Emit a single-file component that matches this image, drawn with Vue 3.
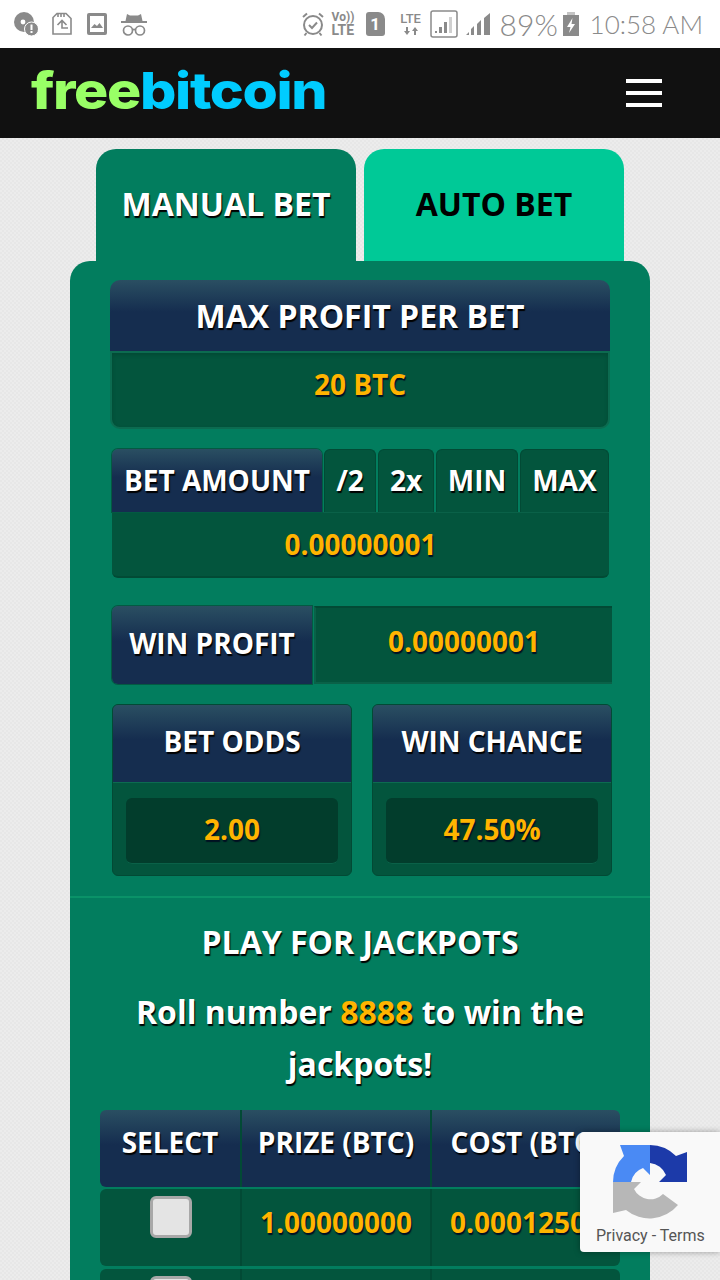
<template>
  <div class="phone">
    <div class="status-bar">
      <div class="status-left">
        <svg class="ico" width="24" height="24" viewBox="0 0 24 24">
          <circle cx="10" cy="10" r="10" fill="#8a8a8a" />
          <circle cx="9" cy="10" r="2.4" fill="#fff" />
          <circle cx="17.5" cy="17" r="7" fill="#8a8a8a" stroke="#fff" stroke-width="1" />
          <rect x="16.5" y="12.5" width="2" height="5.5" fill="#fff" />
          <rect x="16.5" y="19" width="2" height="2" fill="#fff" />
        </svg>
        <svg class="ico" width="22" height="24" viewBox="0 0 22 24" fill="none" stroke="#8a8a8a" stroke-width="1.6">
          <path d="M6 1.5h9l5 5v15.5H2V5.5z" />
          <path d="M7 1v4M10 1v4M13 1v4" />
          <path d="M6.500 13l4.500-4.500 4.500 4.500M11 9v7h6" />
        </svg>
        <svg class="ico" width="22" height="24" viewBox="0 0 22 24">
          <rect x="1" y="1" width="20" height="22" rx="2" fill="#8a8a8a" />
          <rect x="4" y="4" width="14" height="16" fill="#fff" />
          <path d="M5 16l3.500-4 2.500 2 2.500-3 3.500 5z" fill="#8a8a8a" />
        </svg>
        <svg class="ico" width="26" height="24" viewBox="0 0 26 24">
          <path d="M6 2l3 1.500h8l3-1.500 1.500 7H4.500z" fill="#8a8a8a" />
          <rect x="0" y="9" width="26" height="2" fill="#8a8a8a" />
          <g fill="none" stroke="#8a8a8a" stroke-width="1.700">
            <circle cx="7" cy="18.500" r="4.500" />
            <circle cx="19" cy="18.500" r="4.500" />
            <path d="M11.500 17.500h3" />
          </g>
        </svg>
      </div>
      <div class="status-right">
        <svg class="alarm" width="22" height="26" viewBox="0 0 22 26" fill="none" stroke="#8a8a8a" stroke-width="2">
          <circle cx="11" cy="14" r="9" />
          <path d="M7 14l3 3 5-5.500" />
          <path d="M1 6l4-3.500M21 6l-4-3.500M4.500 22l-2 2.500M17.500 22l2 2.500" />
        </svg>
        <div class="volte"><span>Vo))</span><span class="volte-lte">LTE</span></div>
        <div class="sim">1</div>
        <div class="lte">
          <span>LTE</span>
          <svg width="14" height="8" viewBox="0 0 14 8" fill="#8a8a8a">
            <path d="M2 0h2v4h2L3 8 0 4h2zM10 8h2V4h2l-3-4-3 4h2z" />
          </svg>
        </div>
        <svg class="signal-box" width="28" height="28" viewBox="0 0 28 28">
          <rect x="1" y="1" width="26" height="26" rx="2" fill="none" stroke="#8a8a8a" stroke-width="1.500" />
          <rect x="5" y="21" width="2" height="2" fill="#8a8a8a" />
          <rect x="9" y="17" width="3" height="6" fill="#8a8a8a" />
          <rect x="14" y="12" width="3" height="11" fill="#8a8a8a" />
          <rect x="19" y="7" width="3" height="16" fill="#d0d0d0" />
        </svg>
        <svg class="signal" width="25" height="24" viewBox="0 0 25 24">
          <path d="M0 23l3-3v3zM5 23v-6l3-3v9zM11 23V12l4-4v15zM18 23V6l6-5v22z" fill="#8a8a8a" />
        </svg>
        <span class="pct">89%</span>
        <svg class="battery" width="16" height="24" viewBox="0 0 16 24">
          <rect x="4" y="0" width="8" height="3" fill="#c4c4c4" />
          <rect x="0" y="3" width="16" height="21" fill="#8a8a8a" />
          <path d="M9.500 6L4 15h3.500L6 21l6-9H8.500z" fill="#fff" />
        </svg>
        <span class="clock">10:58 AM</span>
      </div>
    </div>

    <header class="site-header">
      <div class="logo"><span class="free">free</span><span class="bitcoin">bitcoin</span></div>
      <div class="burger"><i></i><i></i><i></i></div>
    </header>

    <main class="content">
      <div class="tabs">
        <div class="tab tab-active">MANUAL BET</div>
        <div class="tab tab-other">AUTO BET</div>
      </div>

      <section class="panel">
        <div class="max-profit">
          <div class="head max-head">MAX PROFIT PER BET</div>
          <div class="max-value gold">20 BTC</div>
        </div>

        <div class="bet-amount">
          <div class="bet-row">
            <div class="head bet-label">BET AMOUNT</div>
            <div
              v-for="btn in betButtons"
              :key="btn.label"
              class="bet-btn"
              :style="{ width: btn.width + 'px' }"
            >
              {{ btn.label }}
            </div>
          </div>
          <div class="bet-value gold">0.00000001</div>
        </div>

        <div class="win-profit">
          <div class="head win-label">WIN PROFIT</div>
          <div class="win-value gold">0.00000001</div>
        </div>

        <div class="odds-row">
          <div v-for="item in oddsBoxes" :key="item.label" class="odds-box">
            <div class="head odds-head">{{ item.label }}</div>
            <div class="odds-body">
              <div class="odds-inner gold">{{ item.value }}</div>
            </div>
          </div>
        </div>

        <div class="divider"></div>

        <h3 class="jackpot-title">PLAY FOR JACKPOTS</h3>
        <p class="jackpot-text">Roll number <span class="gold-plain">8888</span> to win the jackpots!</p>

        <div class="jackpot-table">
          <div class="table-row table-head">
            <div class="head cell-select first-head">SELECT</div>
            <div class="head cell-prize">PRIZE (BTC)</div>
            <div class="head cell-cost last-head">COST (BTC)</div>
          </div>
          <div v-for="row in jackpots" :key="row.prize" class="table-row">
            <div class="body-cell cell-select"><span class="check"></span></div>
            <div class="body-cell cell-prize gold">{{ row.prize }}</div>
            <div class="body-cell cell-cost gold">{{ row.cost }}</div>
          </div>
        </div>
      </section>
    </main>

    <div class="recaptcha">
      <svg width="74" height="74" viewBox="0 0 74 74">
        <path d="M0 37A37 37 0 0 1 11 11L7 0H37V30L30 23A19 19 0 0 0 18 37Z" fill="#4a8af4" />
        <path d="M37 0A37 37 0 0 1 63 11L74 7V37H46L53 30A19 19 0 0 0 37 18Z" fill="#1c3aa9" />
        <path d="M0 37H28L21 44A18 18 0 0 0 50 49L65 60A37 37 0 0 1 13 65L0 68Z" fill="#b7b7b7" />
      </svg>
      <div class="recaptcha-links">Privacy - Terms</div>
    </div>
  </div>
</template>

<script setup>
const betButtons = [
  { label: '/2', width: 52 },
  { label: '2x', width: 56 },
  { label: 'MIN', width: 82 },
  { label: 'MAX', width: 89 }
]

const oddsBoxes = [
  { label: 'BET ODDS', value: '2.00' },
  { label: 'WIN CHANCE', value: '47.50%' }
]

const jackpots = [
  { prize: '1.00000000', cost: '0.00012500' },
  { prize: '0.10000000', cost: '0.00002500' }
]
</script>

<style>
html,
body {
  margin: 0;
  background: #eaeaea;
}
</style>

<style scoped>
.phone {
  position: relative;
  width: 720px;
  height: 1280px;
  overflow: hidden;
  background: repeating-conic-gradient(#ececec 0 25%, #e7e7e7 0 50%) 0 0 / 4px 4px;
  font-family: "Open Sans", "Liberation Sans", sans-serif;
}

.status-bar {
  height: 48px;
  background: #fff;
  display: flex;
  justify-content: space-between;
  align-items: center;
  box-sizing: border-box;
  padding: 0 17px 0 14px;
  color: #8a8a8a;
}

.status-left {
  display: flex;
  align-items: center;
  gap: 13px;
}

.status-right {
  display: flex;
  align-items: center;
}

.alarm {
  margin-right: 8px;
}

.volte {
  width: 25px;
  display: flex;
  flex-direction: column;
  font-family: "Roboto", sans-serif;
  font-weight: 700;
  font-size: 12px;
  line-height: 13px;
  margin-right: 9px;
}

.volte-lte {
  font-size: 14px;
}

.sim {
  width: 19px;
  height: 24px;
  background: #8a8a8a;
  color: #fff;
  border-radius: 3px 7px 3px 3px;
  font-family: "Roboto", sans-serif;
  font-weight: 700;
  font-size: 17px;
  line-height: 24px;
  text-align: center;
  margin-right: 13px;
}

.lte {
  width: 26px;
  display: flex;
  flex-direction: column;
  align-items: center;
  gap: 2px;
  font-family: "Roboto", sans-serif;
  font-weight: 500;
  font-size: 13px;
  line-height: 12px;
  margin-right: 6px;
}

.lte svg {
  display: block;
}

.signal-box {
  margin-right: 8px;
}

.signal {
  margin-right: 9px;
}

.pct {
  font-family: "Lato", sans-serif;
  font-weight: 300;
  font-size: 30px;
  line-height: 30px;
  width: 55px;
  margin-right: 8px;
  white-space: nowrap;
}

.battery {
  margin-right: 11px;
}

.clock {
  font-family: "Lato", sans-serif;
  font-weight: 300;
  font-size: 26px;
  line-height: 30px;
  white-space: nowrap;
}

.site-header {
  height: 90px;
  background: #111;
  display: flex;
  justify-content: space-between;
  align-items: center;
  padding: 0 58px 0 31px;
}

.logo {
  font-family: "Inter", sans-serif;
  font-weight: 800;
  font-size: 51px;
  letter-spacing: -1.2px;
  line-height: 60px;
  margin-top: -4px;
  transform: scaleX(1.12);
  transform-origin: left center;
}

.free {
  color: #99ff66;
}

.bitcoin {
  color: #00ccff;
}

.burger {
  width: 36px;
  display: flex;
  flex-direction: column;
  gap: 8px;
}

.burger i {
  display: block;
  height: 4px;
  background: #fff;
}

.content {
  padding-top: 11px;
  width: 580px;
  margin-left: 70px;
}

.tabs {
  display: flex;
  gap: 8px;
  padding-left: 26px;
}

.tab {
  width: 260px;
  height: 112px;
  border-radius: 20px 20px 0 0;
  box-sizing: border-box;
  padding-top: 33px;
  text-align: center;
  font-weight: 700;
  font-size: 32px;
  line-height: 44px;
}

.tab-active {
  background: #027d5e;
  color: #fff;
  text-shadow: 1px 2px 1px #000;
}

.tab-other {
  background: #00c997;
  color: #000;
}

.panel {
  background: #027d5e;
  border-radius: 20px 20px 0 0;
  padding-top: 19px;
  height: 1100px;
}

.head {
  background: linear-gradient(#2a4f62, #152d4f 45%);
  color: #fff;
  font-weight: 700;
  text-align: center;
  text-shadow: 1px 2px 1px #000;
  box-sizing: border-box;
}

.gold {
  color: #ffb400;
  font-weight: 700;
  text-align: center;
  text-shadow: 1px 2px 1px #012;
}

.gold-plain {
  color: #ffb400;
}

.max-profit {
  width: 500px;
  margin-left: 40px;
}

.max-head {
  height: 71px;
  border-radius: 10px 10px 0 0;
  font-size: 32px;
  line-height: 71px;
}

.max-value {
  height: 78px;
  box-sizing: border-box;
  background: #03553d;
  border: 2px solid #0c6b50;
  border-radius: 0 0 10px 10px;
  box-shadow: inset 0 2px 4px rgba(0, 0, 0, 0.15);
  font-size: 28px;
  line-height: 63px;
}

.bet-amount {
  width: 497px;
  margin: 20px 0 0 42px;
}

.bet-row {
  display: flex;
  gap: 2px;
  height: 64px;
  box-sizing: border-box;
  border-bottom: 1px solid #0a6148;
}

.bet-label {
  width: 210px;
  border-radius: 6px 6px 0 0;
  box-shadow: 0 0 0 1px #035a42;
  font-size: 28px;
  line-height: 62px;
}

.bet-btn {
  box-sizing: border-box;
  background: #03553d;
  border: 1px solid #024a35;
  border-bottom: 0;
  border-radius: 6px 6px 0 0;
  color: #fff;
  font-weight: 700;
  font-size: 28px;
  line-height: 60px;
  text-align: center;
  text-shadow: 1px 2px 1px #000;
}

.bet-value {
  height: 65px;
  background: #03553d;
  border-bottom: 2px solid #024a35;
  border-radius: 0 0 6px 6px;
  box-sizing: border-box;
  font-size: 28px;
  line-height: 62px;
}

.win-profit {
  display: flex;
  gap: 2px;
  width: 500px;
  height: 78px;
  margin: 28px 0 0 42px;
}

.win-label {
  width: 200px;
  border-radius: 6px 0 0 6px;
  box-shadow: 0 0 0 1px #035a42;
  font-size: 28px;
  line-height: 75px;
}

.win-value {
  flex: 1;
  background: #03553d;
  border-top: 2px solid #024a35;
  border-left: 2px solid #0a6148;
  border-bottom: 2px solid #0a6148;
  box-sizing: border-box;
  font-size: 28px;
  line-height: 67px;
}

.odds-row {
  display: flex;
  gap: 20px;
  width: 500px;
  margin: 20px 0 0 42px;
}

.odds-box {
  width: 240px;
  height: 172px;
  border-radius: 6px;
  overflow: hidden;
  background: #03553d;
  border: 1px solid #024a35;
  box-sizing: border-box;
}

.odds-head {
  height: 78px;
  border-bottom: 1px solid #0c6b50;
  font-size: 28px;
  line-height: 72px;
}

.odds-body {
  padding: 15px 13px 0;
}

.odds-inner {
  height: 66px;
  box-sizing: border-box;
  background: #023d2c;
  border-radius: 6px;
  border-bottom: 1px solid #0a6148;
  font-size: 28px;
  line-height: 62px;
}

.divider {
  height: 2px;
  background: #0a9268;
  margin-top: 20px;
}

.jackpot-title {
  margin: 22px 0 0;
  color: #fff;
  font-weight: 700;
  font-size: 32px;
  line-height: 44px;
  text-align: center;
  text-shadow: 1px 2px 1px #000;
}

.jackpot-text {
  margin: 22px auto 0;
  width: 500px;
  color: #fff;
  font-weight: 700;
  font-size: 32px;
  line-height: 52px;
  text-align: center;
  text-shadow: 1px 2px 1px #000;
}

.jackpot-table {
  margin: 20px 0 0 30px;
  width: 520px;
}

.table-row {
  display: grid;
  grid-template-columns: 142px 190px 188px;
  height: 77px;
  margin-bottom: 3px;
}

.table-head {
  margin-bottom: 2px;
}

.table-head .head {
  font-size: 28px;
  line-height: 64px;
  border-right: 2px solid #024a35;
  white-space: nowrap;
  overflow: hidden;
}

.first-head {
  border-radius: 6px 0 0 6px;
}

.last-head {
  border-right: 0 !important;
  border-radius: 0 6px 6px 0;
}

.body-cell {
  background: #03553d;
  border-right: 2px solid #024a35;
  box-sizing: border-box;
  font-size: 28px;
  line-height: 66px;
  white-space: nowrap;
  overflow: hidden;
}

.body-cell.cell-select {
  border-radius: 6px 0 0 6px;
  display: flex;
  justify-content: center;
  padding: 7px 0 0 1px;
  box-sizing: border-box;
}

.body-cell.cell-cost {
  border-right: 0;
  border-radius: 0 6px 6px 0;
}

.check {
  display: block;
  width: 42px;
  height: 42px;
  box-sizing: border-box;
  background: #e4e4e4;
  border: 3px solid #a8a8a8;
  border-radius: 6px;
}

.recaptcha {
  position: absolute;
  left: 580px;
  top: 1132px;
  width: 140px;
  height: 120px;
  box-sizing: border-box;
  background: #f9f9f9;
  border-radius: 4px 0 0 4px;
  box-shadow: 0 0 6px rgba(0, 0, 0, 0.35);
  padding: 13px 0 0 33px;
}

.recaptcha svg {
  display: block;
}

.recaptcha-links {
  margin: 7px 0 0 -17px;
  font-family: "Roboto", sans-serif;
  font-size: 16px;
  line-height: 20px;
  color: #555;
  white-space: nowrap;
}
</style>
